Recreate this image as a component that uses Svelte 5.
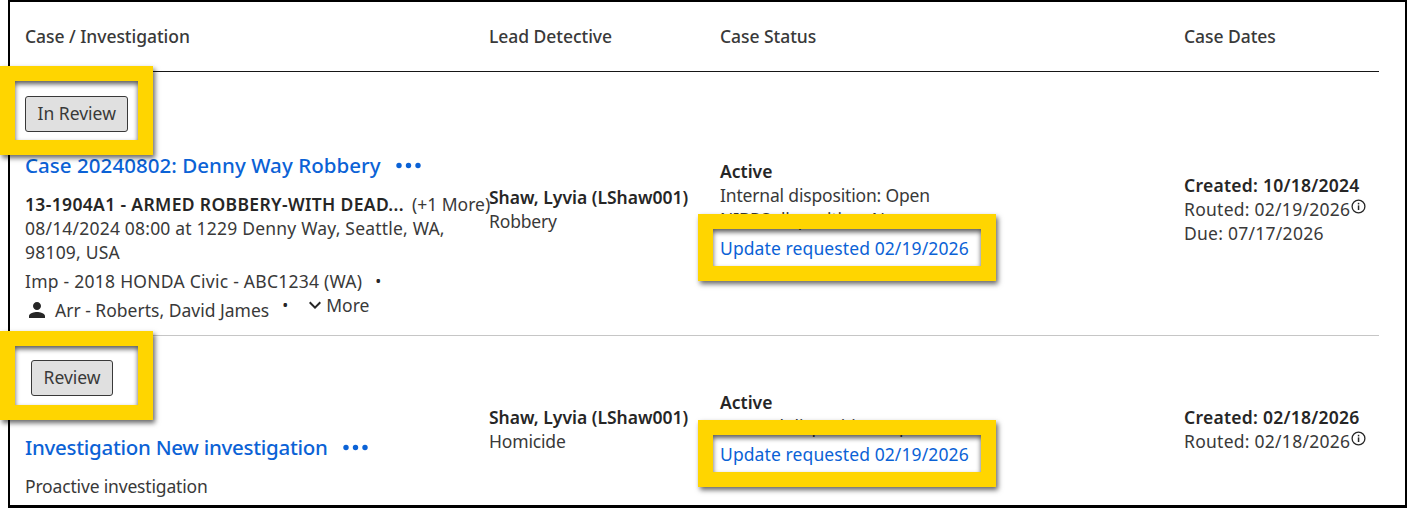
<script lang="ts">
  const headers = ['Case / Investigation', 'Lead Detective', 'Case Status', 'Case Dates'];
</script>

{#snippet dots()}
  <svg class="dots" width="25" height="7" viewBox="0 0 25 7" aria-hidden="true">
    <circle cx="3" cy="3.5" r="2.7" />
    <circle cx="12.5" cy="3.5" r="2.7" />
    <circle cx="22" cy="3.5" r="2.7" />
  </svg>
{/snippet}

{#snippet info()}
  <svg class="info" width="15" height="15" viewBox="0 0 15 15" aria-hidden="true">
    <circle cx="7.5" cy="7.5" r="6.4" fill="none" stroke="#262626" stroke-width="1.3" />
    <rect x="6.8" y="6.4" width="1.5" height="4.6" fill="#262626" />
    <rect x="6.8" y="3.8" width="1.5" height="1.6" fill="#262626" />
  </svg>
{/snippet}

<div class="frame">
  <div class="row head">
    {#each headers as h}
      <div class="th">{h}</div>
    {/each}
  </div>

  <div class="row first">
    <div class="case">
      <div class="mark mark-first"><button class="btn">In Review</button></div>
      <div class="title"><a href="#case">Case 20240802: Denny Way Robbery</a>{@render dots()}</div>
      <div class="charge"><b>13-1904A1 - ARMED ROBBERY-WITH DEAD...</b><span class="more-count">(+1 More)</span></div>
      <div class="where">08/14/2024 08:00 at 1229 Denny Way, Seattle, WA, 98109, USA</div>
      <div class="line imp">Imp - 2018 HONDA Civic - ABC1234 (WA)<span class="bullet">•</span></div>
      <div class="line person">
        <svg width="24" height="24" viewBox="0 0 24 24" fill="#262626" aria-hidden="true">
          <path d="M12 12c2.21 0 4-1.79 4-4s-1.79-4-4-4-4 1.79-4 4 1.79 4 4 4zm0 2c-2.67 0-8 1.34-8 4v2h16v-2c0-2.66-5.33-4-8-4z" />
        </svg>
        <span class="arr">Arr - Roberts, David James</span>
        <span class="bullet up">•</span>
        <span class="expand">
          <svg class="chevron" width="24" height="24" viewBox="0 0 24 24" fill="#262626" aria-hidden="true">
            <path d="M16.59 8.59L12 13.17 7.41 8.59 6 10l6 6 6-6z" />
          </svg>More
        </span>
      </div>
    </div>
    <div class="lead">
      <b>Shaw, Lyvia (LShaw001)</b>
      <div class="sub">Robbery</div>
    </div>
    <div class="status status-first">
      <b>Active</b>
      <div class="sub">Internal disposition: Open</div>
      <div class="sub">NIBRS disposition: None</div>
      <div class="mark mark-update over-first"><a href="#update">Update requested 02/19/2026</a></div>
    </div>
    <div class="dates">
      <b>Created: 10/18/2024</b>
      <div>Routed: 02/19/2026{@render info()}</div>
      <div>Due: 07/17/2026</div>
    </div>
  </div>

  <div class="row second">
    <div class="case">
      <div class="mark mark-second"><button class="btn">Review</button></div>
      <div class="title title-second"><a href="#inv">Investigation New investigation</a>{@render dots()}</div>
      <div class="proactive">Proactive investigation</div>
    </div>
    <div class="lead">
      <b>Shaw, Lyvia (LShaw001)</b>
      <div class="sub">Homicide</div>
    </div>
    <div class="status status-second">
      <b>Active</b>
      <div class="sub">Internal disposition: Open</div>
      <div class="mark mark-update over-second"><a href="#update">Update requested 02/19/2026</a></div>
    </div>
    <div class="dates">
      <b>Created: 02/18/2026</b>
      <div>Routed: 02/18/2026{@render info()}</div>
    </div>
  </div>
</div>

<style>
  :global(body) {
    overflow: hidden;
    background: #fff;
  }

  .frame {
    box-sizing: border-box;
    width: 1399px;
    height: 508px;
    margin-left: 8px;
    padding: 0 26px 0 15px;
    border: 2px solid #000;
    border-bottom-width: 3px;
    clip-path: inset(0 0 0 -8px);
    font-family: 'Noto Sans', sans-serif;
    font-size: 17.5px;
    line-height: 24px;
    color: #393939;
  }

  b {
    font-weight: 600;
    color: #262626;
  }

  a {
    color: #0b62d6;
    text-decoration: none;
  }

  .row {
    display: grid;
    grid-template-columns: 464px 231px 464px 195px;
  }

  .head {
    padding: 22px 0 23px;
    border-bottom: 1px solid #161616;
  }

  .th {
    font-weight: 500;
    letter-spacing: -0.05px;
  }

  .first {
    border-bottom: 1px solid #c6c6c6;
  }

  .case {
    padding-bottom: 13px;
    min-width: 0;
  }

  .mark {
    position: relative;
    z-index: 2;
    box-sizing: border-box;
    display: flex;
    background: #fff;
    border: 15px solid #ffd500;
    box-shadow: 2px 3px 5px rgba(0, 0, 0, 0.6), inset 0 3px 5px rgba(0, 0, 0, 0.65);
  }

  .mark-first,
  .mark-second {
    width: 153px;
    height: 89px;
    margin-left: -25px;
  }

  .mark-first {
    margin-top: -6px;
    padding: 15px 0 0 10px;
  }

  .mark-second {
    margin-top: -5px;
    padding: 14px 0 0 16px;
  }

  .btn {
    height: 36px;
    padding: 0 11.5px 2px;
    background: #e0e0e0;
    border: 1px solid #393939;
    border-radius: 3px;
    font: inherit;
    color: #393939;
  }

  .title {
    display: flex;
    align-items: center;
    gap: 15px;
    margin-top: -2px;
    font-size: 20.5px;
    font-weight: 500;
    letter-spacing: 0.05px;
  }

  .title-second {
    margin-top: 15px;
    letter-spacing: -0.28px;
  }

  .dots {
    fill: #0b62d6;
  }

  .charge {
    display: flex;
    gap: 8px;
    margin-top: 15px;
    white-space: nowrap;
  }

  .charge b {
    letter-spacing: 0.35px;
  }

  .where {
    width: 430px;
    letter-spacing: 0.2px;
  }

  .line {
    display: flex;
    align-items: center;
  }

  .imp {
    margin-top: 5px;
    letter-spacing: 0.25px;
  }

  .bullet {
    margin-left: 13px;
    font-size: 16px;
    color: #262626;
  }

  .person {
    margin-top: 5px;
  }

  .arr {
    margin-left: 6px;
  }

  .up,
  .expand {
    transform: translateY(-5px);
  }

  .expand {
    display: flex;
    align-items: center;
    margin-left: 15px;
  }

  .chevron {
    margin-right: -1px;
  }

  .proactive {
    margin-top: 15px;
    letter-spacing: -0.17px;
  }

  .lead,
  .dates {
    align-self: center;
    padding-top: 11px;
  }

  .sub {
    letter-spacing: -0.17px;
  }

  .dates {
    letter-spacing: 0.26px;
  }

  .status {
    align-self: start;
  }

  .status-first {
    padding-top: 87px;
  }

  .status-second {
    padding-top: 54px;
  }

  .mark-update {
    width: 298px;
    height: 67px;
    margin-left: -22px;
    padding-left: 7px;
    align-items: center;
    background: transparent;
    letter-spacing: 0.1px;
  }

  .over-first {
    margin-top: -17px;
  }

  .over-second {
    margin-top: -18px;
  }

  .info {
    vertical-align: 2px;
    margin-left: 1px;
  }
</style>
